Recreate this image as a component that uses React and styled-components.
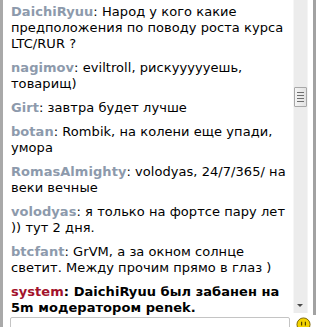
import React from 'react';
import styled, { createGlobalStyle } from 'styled-components';

const Global = createGlobalStyle`
  html, body { margin: 0; padding: 0; background: #fff; }
`;

const Frame = styled.div`
  width: 319px;
  height: 327px;
  display: flex;
  flex-direction: column;
  overflow: hidden;
  background: #fff;
  border-left: 3px solid #a9a9a9;
  box-sizing: border-box;
  font-family: "DejaVu Sans", Verdana, sans-serif;
  font-size: 13px;
  letter-spacing: 0.05px;
  line-height: 16px;
  color: #000;
`;

const Body = styled.div`
  display: flex;
  height: 315px;
  flex-shrink: 0;
`;

const Messages = styled.div`
  flex: 1;
  min-width: 0;
  overflow: hidden;
  padding: 4px 0 0 8px;
  display: flex;
  flex-direction: column;
  gap: 8px;
`;

const Line = styled.div`
  white-space: nowrap;
  font-weight: ${(p) => (p.$bold ? 'bold' : 'normal')};
`;

const Nick = styled.span`
  font-weight: bold;
  color: ${(p) => (p.$system ? '#a3122b' : '#8d9aac')};
`;

const Colon = styled.span`
  font-weight: ${(p) => (p.$bold ? 'bold' : 'normal')};
`;

const RightSide = styled.div`
  display: flex;
  width: 26px;
  flex-shrink: 0;
`;

const Track = styled.div`
  width: 15px;
  height: 313px;
  box-sizing: border-box;
  background: #ececec;
  border-left: 1px solid #f6f6f6;
  border-right: 1px solid #f4f4f4;
  position: relative;
`;

const Thumb = styled.div`
  position: absolute;
  top: 87px;
  left: 0;
  width: 13px;
  height: 20px;
  box-sizing: border-box;
  border: 1px solid #a8a8a8;
  border-radius: 1px;
  background: linear-gradient(to right, #f4f4f4, #e2e2e2);
  display: flex;
  flex-direction: column;
  align-items: center;
  justify-content: center;
  gap: 2px;
`;

const Grip = styled.div`
  width: 7px;
  height: 1px;
  background: #6f6f6f;
`;

const DownArrow = styled.div`
  position: absolute;
  bottom: 6px;
  left: 3px;
  width: 0;
  height: 0;
  border-left: 3px solid transparent;
  border-right: 3px solid transparent;
  border-top: 3px solid #4a4a4a;
`;

const Gap = styled.div`
  width: 5px;
`;

const Edge = styled.div`
  width: 3px;
  background: #a2a2a2;
`;

const Footer = styled.div`
  display: flex;
  align-items: flex-start;
  padding: 2px 0 0 7px;
  gap: 6px;
`;

const Input = styled.div`
  width: 280px;
  height: 20px;
  box-sizing: border-box;
  border: 1px solid #c4c4c4;
  border-radius: 2px;
  background: #fff;
`;

const Smiley = () => (
  <svg width="15" height="15" viewBox="0 0 16 16">
    <circle cx="8" cy="8" r="7" fill="#f3d400" stroke="#7a6200" strokeWidth="1" />
    <line x1="6" y1="5" x2="6" y2="9" stroke="#4a3a00" strokeWidth="1.2" />
    <line x1="10" y1="5" x2="10" y2="9" stroke="#4a3a00" strokeWidth="1.2" />
  </svg>
);

const messages = [
  { nick: 'DaichiRyuu', lines: ['Народ у кого какие', 'предположения по поводу роста курса', 'LTC/RUR ?'] },
  { nick: 'nagimov', lines: ['eviltroll, рискуууууешь,', 'товарищ)'] },
  { nick: 'Girt', lines: ['завтра будет лучше'] },
  { nick: 'botan', lines: ['Rombik, на колени еще упади,', 'умора'] },
  { nick: 'RomasAlmighty', lines: ['volodyas, 24/7/365/ на', 'веки вечные'] },
  { nick: 'volodyas', lines: ['я только на фортсе пару лет', ')) тут 2 дня.'] },
  { nick: 'btcfant', lines: ['GrVM, а за окном солнце', 'светит. Между прочим прямо в глаз )'] },
  { nick: 'system', system: true, lines: ['DaichiRyuu был забанен на', '5m модератором penek.'] },
];

const Message = ({ nick, system, lines }) => (
  <div>
    {lines.map((text, i) => (
      <Line key={i} $bold={system}>
        {i === 0 && (
          <>
            <Nick $system={system}>{nick}</Nick>
            <Colon $bold={system}>: </Colon>
          </>
        )}
        {text}
      </Line>
    ))}
  </div>
);

export default function App() {
  return (
    <Frame>
      <Global />
      <Body>
        <Messages>
          {messages.map((m) => (
            <Message key={m.nick} {...m} />
          ))}
        </Messages>
        <RightSide>
          <Track>
            <Thumb>
              <Grip />
              <Grip />
              <Grip />
              <Grip />
            </Thumb>
            <DownArrow />
          </Track>
          <Gap />
          <Edge />
        </RightSide>
      </Body>
      <Footer>
        <Input />
        <Smiley />
      </Footer>
    </Frame>
  );
}
